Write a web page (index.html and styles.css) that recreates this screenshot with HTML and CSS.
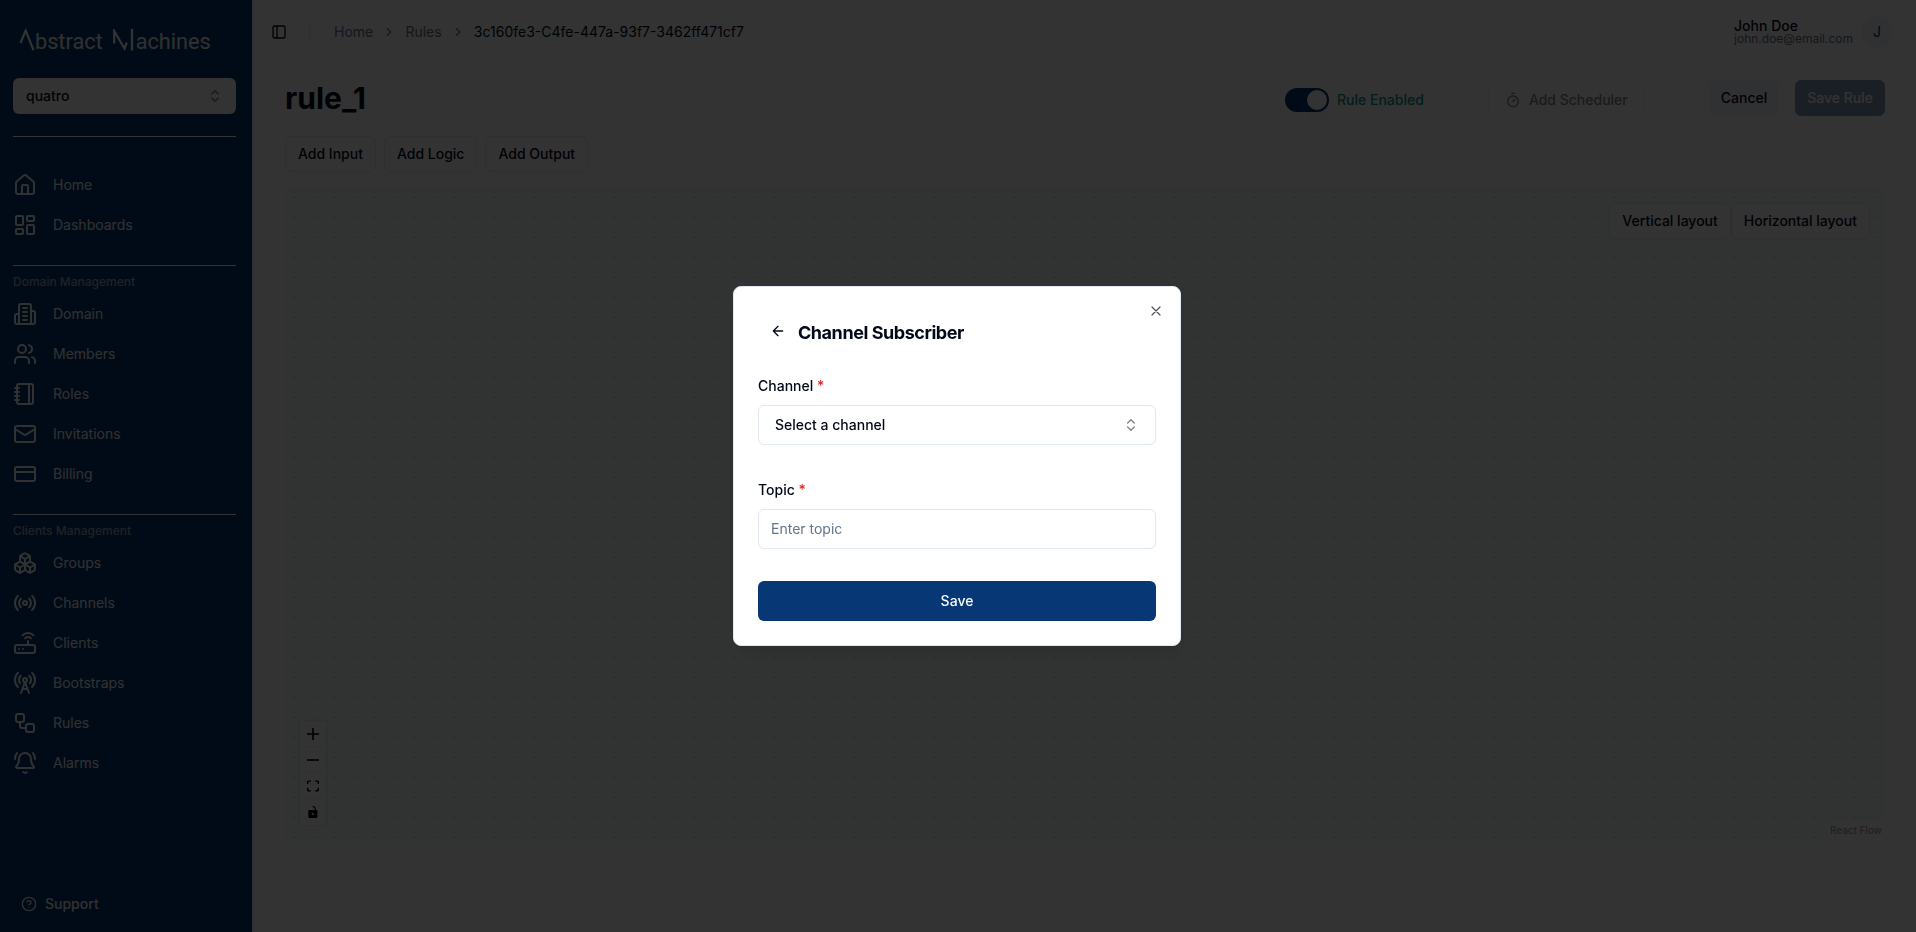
FILE: index.html
```html
<!DOCTYPE html>
<html lang="en">
<head>
<meta charset="utf-8">
<title>rule_1</title>
<link rel="stylesheet" href="styles.css">
</head>
<body>
<div class="app">
  <aside class="sidebar">
    <div class="logo">
      <svg class="logo-a" width="16" height="22" viewBox="0 0 16 22"><path d="M1.500 14 6.700 1.500 14.500 21.200"/></svg><span class="logo-text logo-first">bstract</span>
      <svg class="logo-m" width="21" height="22" viewBox="0 0 21 22"><path d="M1.200 14.500V2L11.500 19.500 13.800 13.500M19 0V21.500"/></svg><span class="logo-text logo-last">achines</span>
    </div>
    <div class="workspace"><span>quatro</span>
      <svg class="icon i16 dim" viewBox="0 0 24 24"><path d="m7 15 5 5 5-5M7 9l5-5 5 5"/></svg>
    </div>
    <nav class="group first">
      <a class="item"><svg class="icon" viewBox="0 0 24 24"><path d="M15 21v-8a1 1 0 0 0-1-1h-4a1 1 0 0 0-1 1v8"/><path d="M3 10a2 2 0 0 1 .709-1.528l7-5.999a2 2 0 0 1 2.582 0l7 5.999A2 2 0 0 1 21 10v9a2 2 0 0 1-2 2H5a2 2 0 0 1-2-2z"/></svg><span>Home</span></a>
      <a class="item"><svg class="icon" viewBox="0 0 24 24"><rect width="7" height="9" x="3" y="3" rx="1"/><rect width="7" height="5" x="14" y="3" rx="1"/><rect width="7" height="9" x="14" y="12" rx="1"/><rect width="7" height="5" x="3" y="16" rx="1"/></svg><span>Dashboards</span></a>
    </nav>
    <nav class="group">
      <div class="heading">Domain Management</div>
      <a class="item"><svg class="icon" viewBox="0 0 24 24"><path d="M6 22V4a2 2 0 0 1 2-2h8a2 2 0 0 1 2 2v18Z"/><path d="M6 12H4a2 2 0 0 0-2 2v6a2 2 0 0 0 2 2h2M18 9h2a2 2 0 0 1 2 2v9a2 2 0 0 1-2 2h-2M10 6h4M10 10h4M10 14h4M10 18h4"/></svg><span>Domain</span></a>
      <a class="item"><svg class="icon" viewBox="0 0 24 24"><path d="M16 21v-2a4 4 0 0 0-4-4H6a4 4 0 0 0-4 4v2"/><circle cx="9" cy="7" r="4"/><path d="M22 21v-2a4 4 0 0 0-3-3.870M16 3.130a4 4 0 0 1 0 7.750"/></svg><span>Members</span></a>
      <a class="item"><svg class="icon" viewBox="0 0 24 24"><path d="M2 6h4M2 10h4M2 14h4M2 18h4M16 2v20"/><rect width="16" height="20" x="4" y="2" rx="2"/></svg><span>Roles</span></a>
      <a class="item"><svg class="icon" viewBox="0 0 24 24"><rect width="20" height="16" x="2" y="4" rx="2"/><path d="m22 7-8.970 5.700a1.940 1.940 0 0 1-2.060 0L2 7"/></svg><span>Invitations</span></a>
      <a class="item"><svg class="icon" viewBox="0 0 24 24"><rect width="20" height="14" x="2" y="5" rx="2"/><path d="M2 10h20"/></svg><span>Billing</span></a>
    </nav>
    <nav class="group">
      <div class="heading">Clients Management</div>
      <a class="item"><svg class="icon" viewBox="0 0 24 24"><path d="M2.970 12.920A2 2 0 0 0 2 14.630v3.240a2 2 0 0 0 .97 1.710l3 1.800a2 2 0 0 0 2.060 0L12 19v-5.500l-5-3-4.030 2.420Z"/><path d="m7 16.500-4.740-2.850M7 16.500l5-3M7 16.500v5.170"/><path d="M12 13.500V19l3.970 2.380a2 2 0 0 0 2.060 0l3-1.800a2 2 0 0 0 .97-1.710v-3.240a2 2 0 0 0-.97-1.710L17 10.500l-5 3Z"/><path d="m17 16.500-5-3M17 16.500l4.740-2.850M17 16.500v5.170"/><path d="M7.970 4.420A2 2 0 0 0 7 6.130v4.370l5 3 5-3V6.130a2 2 0 0 0-.97-1.710l-3-1.800a2 2 0 0 0-2.060 0l-3 1.800Z"/><path d="M12 8 7.260 5.150M12 8l4.740-2.850M12 13.500V8"/></svg><span>Groups</span></a>
      <a class="item"><svg class="icon" viewBox="0 0 24 24"><path d="M4.900 19.100C1 15.200 1 8.800 4.900 4.900M7.800 16.200c-2.300-2.300-2.300-6.100 0-8.500M16.200 7.800c2.300 2.300 2.300 6.100 0 8.500M19.100 4.900C23 8.800 23 15.100 19.100 19"/><circle cx="12" cy="12" r="2"/></svg><span>Channels</span></a>
      <a class="item"><svg class="icon" viewBox="0 0 24 24"><rect width="20" height="8" x="2" y="14" rx="2"/><path d="M6.010 18H6M10.010 18H10M15 10v4M17.840 7.170a4 4 0 0 0-5.660 0M20.660 4.340a8 8 0 0 0-11.310 0"/></svg><span>Clients</span></a>
      <a class="item"><svg class="icon" viewBox="0 0 24 24"><path d="M4.900 16.100C1 12.200 1 5.800 4.900 1.900M7.800 4.700a6.140 6.140 0 0 0-.8 7.500"/><circle cx="12" cy="9" r="2"/><path d="M16.200 4.800c2 2 2.260 5.110.8 7.470M19.100 1.900a9.960 9.960 0 0 1 0 14.100M9.500 18h5M8 22l4-11 4 11"/></svg><span>Bootstraps</span></a>
      <a class="item"><svg class="icon" viewBox="0 0 24 24"><rect width="8" height="8" x="3" y="3" rx="2"/><path d="M7 11v4a2 2 0 0 0 2 2h4"/><rect width="8" height="8" x="13" y="13" rx="2"/></svg><span>Rules</span></a>
      <a class="item"><svg class="icon" viewBox="0 0 24 24"><path d="M10.268 21a2 2 0 0 0 3.464 0M22 8c0-2.300-.8-4.300-2-6M3.262 15.326A1 1 0 0 0 4 17h16a1 1 0 0 0 .74-1.673C19.410 13.956 18 12.499 18 8A6 6 0 0 0 6 8c0 4.499-1.411 5.956-2.738 7.326M4 2C2.800 3.700 2 5.700 2 8"/></svg><span>Alarms</span></a>
    </nav>
    <div class="support"><svg class="icon i16" viewBox="0 0 24 24"><circle cx="12" cy="12" r="10"/><path d="M9.090 9a3 3 0 0 1 5.830 1c0 2-3 3-3 3M12 17h.01"/></svg><span>Support</span></div>
  </aside>

  <main class="main">
    <header class="topbar">
      <svg class="icon i16" viewBox="0 0 24 24"><rect width="18" height="18" x="3" y="3" rx="2"/><path d="M9 3v18"/></svg>
      <div class="vsep"></div>
      <div class="crumbs">
        <span>Home</span>
        <svg class="icon i14" viewBox="0 0 24 24"><path d="m9 18 6-6-6-6"/></svg>
        <span>Rules</span>
        <svg class="icon i14" viewBox="0 0 24 24"><path d="m9 18 6-6-6-6"/></svg>
        <span class="current">3c160fe3-C4fe-447a-93f7-3462ff471cf7</span>
      </div>
      <div class="user">
        <div class="user-text"><div class="user-name">John Doe</div><div class="user-mail">john.doe@email.com</div></div>
        <div class="avatar">J</div>
      </div>
    </header>
    <div class="content">
      <div class="titlebar">
        <h1>rule_1</h1>
        <div class="toggle-wrap"><div class="toggle"><div class="knob"></div></div><span>Rule Enabled</span></div>
        <div class="btn scheduler"><svg class="icon i16" viewBox="0 0 24 24"><path d="M10 2h4M12 14l3-3"/><circle cx="12" cy="14" r="8"/></svg><span>Add Scheduler</span></div>
        <div class="btn cancel">Cancel</div>
        <div class="btn save-rule">Save Rule</div>
      </div>
      <div class="tools">
        <div class="btn">Add Input</div><div class="btn">Add Logic</div><div class="btn">Add Output</div>
      </div>
      <div class="canvas">
        <svg class="dots" width="100%" height="100%"><defs><pattern id="dot" width="20" height="20" patternUnits="userSpaceOnUse" x="-1" y="-1"><circle cx="10.500" cy="10.500" r="0.550"/></pattern></defs><rect width="100%" height="100%" fill="url(#dot)"/></svg>
        <div class="layouts"><div class="btn">Vertical layout</div><div class="btn">Horizontal layout</div></div>
        <div class="controls">
          <div class="control"><svg width="12" height="12" viewBox="0 0 32 32"><path d="M32 18.133H18.133V32h-4.266V18.133H0v-4.266h13.867V0h4.266v13.867H32z"/></svg></div>
          <div class="control"><svg width="12" height="12" viewBox="0 0 32 32"><path d="M0 13.867h32v4.266H0z"/></svg></div>
          <div class="control"><svg width="12" height="12" viewBox="0 0 32 30"><path d="M3.692 4.630c0-.53.4-.938.939-.938h5.215V0H4.708C2.130 0 0 2.054 0 4.630v5.216h3.692V4.631zM27.354 0h-5.200v3.692h5.170c.53 0 .984.400.984.939v5.215H32V4.631A4.624 4.624 0 0 0 27.354 0zm.954 24.830c0 .532-.4.940-.939.940h-5.215v3.768h5.215c2.577 0 4.631-2.130 4.631-4.707v-5.139h-3.692v5.139zm-23.677.940a.919.919 0 0 1-.939-.940v-5.138H0v5.139c0 2.577 2.130 4.707 4.708 4.707h5.138V25.770H4.631z"/></svg></div>
          <div class="control"><svg width="12" height="12" viewBox="0 0 25 32"><path fill-rule="evenodd" d="M21.333 10.667H19.810V7.619C19.810 3.429 16.380 0 12.190 0c-4.114 1.828-1.370 2.133.305 2.438 1.676.305 4.420 2.590 4.420 5.181v3.048H3.047A3.056 3.056 0 0 0 0 13.714v15.238A3.056 3.056 0 0 0 3.048 32h18.285a3.056 3.056 0 0 0 3.048-3.048V13.714a3.056 3.056 0 0 0-3.048-3.047zM12.190 24.533a3.056 3.056 0 0 1-3.047-3.047 3.056 3.056 0 0 1 3.047-3.048 3.056 3.056 0 0 1 3.048 3.048 3.056 3.056 0 0 1-3.048 3.047z"/></svg></div>
        </div>
        <div class="credit">React Flow</div>
      </div>
    </div>
  </main>
</div>

<div class="overlay">
  <div class="modal">
    <svg class="icon i16 close" viewBox="0 0 24 24"><path d="M18 6 6 18M6 6l12 12"/></svg>
    <div class="modal-head"><svg class="icon i16" viewBox="0 0 24 24"><path d="m12 19-7-7 7-7M19 12H5"/></svg><h2>Channel Subscriber</h2></div>
    <label class="label">Channel <span class="req">*</span></label>
    <div class="field select"><span>Select a channel</span><svg class="icon i16 dim" viewBox="0 0 24 24"><path d="m7 15 5 5 5-5M7 9l5-5 5 5"/></svg></div>
    <label class="label second">Topic <span class="req">*</span></label>
    <div class="field input">Enter topic</div>
    <div class="save">Save</div>
  </div>
</div>
</body>
</html>
```
FILE: styles.css
```css
* { box-sizing: border-box; }
body { margin: 0; font: 14px/20px Inter, sans-serif; color: #020817; background: #fff; overflow: hidden; }
h1, h2 { margin: 0; }
.app { display: flex; width: 1916px; height: 932px; }
.icon { width: 24px; height: 24px; flex: none; fill: none; stroke: currentColor; stroke-width: 2; stroke-linecap: round; stroke-linejoin: round; }
.i16 { width: 16px; height: 16px; }
.i14 { width: 14px; height: 14px; }
.dim { opacity: .5; }

/* Sidebar */
.sidebar { width: 253px; flex: none; padding: 28px 16px 0 13px; background: #083776; border-right: 1px solid #e2e8f0; display: flex; flex-direction: column; color: #f1f2f4; }
.logo { display: flex; height: 24px; padding: 1px 0 0 6px; }
.logo svg { flex: none; fill: none; stroke: #fff; stroke-width: 2.2; }
.logo-text { font: 21.7px/26px Roboto, sans-serif; }
.logo-first { margin-right: 10px; }
.logo-last { margin-left: 2px; }
.workspace { margin-top: 26px; height: 36px; padding: 0 13px; border-radius: 6px; background: #fff; color: #020817; font-weight: 500; display: flex; align-items: center; justify-content: space-between; }
.group { border-top: 1px solid #fff; padding-bottom: 20px; }
.first { margin-top: 22px; padding-top: 28px; }
.heading { height: 28px; line-height: 32px; font-size: 12px; font-weight: 500; color: #9da7b5; }
.item { height: 40px; display: flex; align-items: center; gap: 16px; }
.support { margin-top: auto; margin-bottom: 18px; padding-left: 8px; display: flex; align-items: center; gap: 8px; font-weight: 500; }

/* Main */
.main { flex: 1; min-width: 0; }
.topbar { height: 64px; padding: 0 23px 0 18px; display: flex; align-items: center; }
.vsep { width: 1px; height: 16px; margin: 0 24px 0 22px; background: #e2e8f0; }
.crumbs { display: flex; align-items: center; gap: 9.1px; color: #64748b; }
.current { color: #020817; }
.user { margin-left: auto; display: flex; align-items: center; gap: 8px; }
.user-name { font-weight: 500; line-height: 14px; }
.user-mail { font-size: 12px; line-height: 12px; color: #64748b; }
.avatar { width: 32px; height: 32px; border-radius: 50%; background: #f1f5f9; color: #083776; display: flex; align-items: center; justify-content: center; }
.content { padding: 16px 31px 0 32px; }
.titlebar { display: flex; align-items: flex-start; height: 40px; }
h1 { font-size: 30px; line-height: 36px; font-weight: 700; margin-right: auto; }
.toggle-wrap { display: flex; align-items: center; gap: 8px; height: 40px; color: #0d9488; font-weight: 550; margin-right: 64px; }
.toggle { width: 44px; height: 24px; border-radius: 12px; background: #083776; padding: 2px; display: flex; justify-content: flex-end; }
.knob { width: 20px; height: 20px; border-radius: 50%; background: #fff; box-shadow: 0 10px 15px -3px #0000001a; }
.btn { height: 36px; padding: 0 12px; border: 1px solid #e2e8f0; border-radius: 6px; background: #fff; font-weight: 500; display: flex; align-items: center; white-space: nowrap; }
.scheduler { height: 40px; padding: 0 16px; gap: 8px; opacity: .5; margin-right: 64px; }
.cancel { background: #f1f5f9; border-color: #f1f5f9; padding: 0 11px; margin-right: 16px; }
.save-rule { background: #083776; border-color: #083776; color: #fff; opacity: .5; padding: 0 11px; }
.tools { display: flex; gap: 8px; margin-top: 16px; }
.canvas { position: relative; height: 652px; margin-top: 16px; background: #f0fdf4; border: 0; }
.dots { display: block; fill: #81818a; }
.layouts { position: absolute; top: 15px; right: 15px; display: flex; }
.controls { position: absolute; left: 15px; bottom: 15px; box-shadow: 0 0 2px 1px #00000014; }
.control { width: 26px; height: 26px; background: #fefefe; border-bottom: 1px solid #eee; display: flex; align-items: center; justify-content: center; }
.control:last-child { border-bottom: 0; }
.credit { position: absolute; right: 0; bottom: 0; padding: 2px 3px; font-size: 10px; line-height: 15px; color: #999; background: #ffffff80; }

/* Dialog */
.overlay { position: fixed; inset: 0; background: #000c; display: flex; align-items: center; justify-content: center; }
.modal { position: relative; width: 448px; height: 360px; margin-left: -2px; padding: 24px; border: 1px solid #e2e8f0; border-radius: 8px; background: #fff; box-shadow: 0 10px 15px -3px #0000001a, 0 4px 6px -4px #0000001a; }
.close { position: absolute; right: 16px; top: 16px; opacity: .7; stroke-width: 1.8; }
.modal-head { height: 43px; padding: 0 0 0 12px; display: flex; align-items: center; gap: 12px; }
.modal-head .icon { margin-bottom: 3px; }
h2 { font-size: 18px; line-height: 28px; font-weight: 700; letter-spacing: -.45px; }
.label { display: block; margin-top: 22px; height: 20px; font-weight: 500; }
.req { color: #dc2626; }
.field { height: 40px; margin-top: 9px; border: 1px solid #e2e8f0; border-radius: 6px; display: flex; align-items: center; }
.select { padding: 0 16px; justify-content: space-between; font-weight: 500; }
.second { margin-top: 35px; }
.input { padding: 0 12px; color: #64748b; }
.save { height: 40px; margin-top: 32px; border-radius: 6px; background: #083776; color: #f8fafc; font-weight: 500; display: flex; align-items: center; justify-content: center; }
```
